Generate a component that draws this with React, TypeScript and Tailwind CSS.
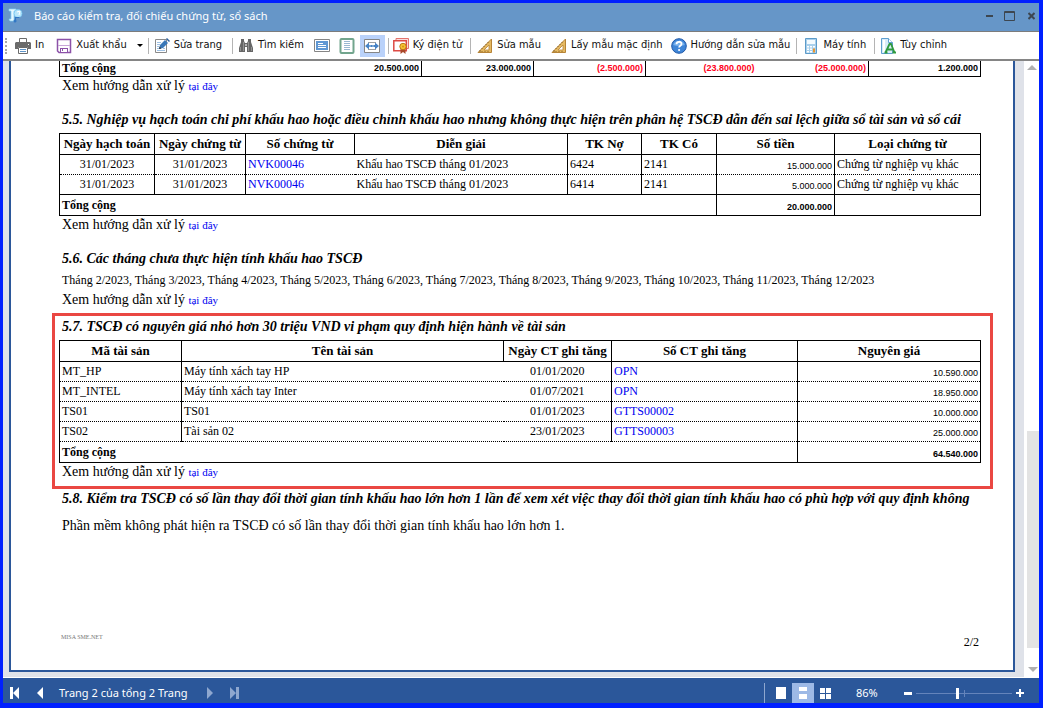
import type { ReactNode } from 'react';

const SERIF = "font-['Liberation_Serif',serif]";
const NUM = "font-['Liberation_Sans',sans-serif] text-[9px]";

/* ---------- toolbar icons ---------- */

const svg = (children: ReactNode) => (
  <svg width="16" height="16" viewBox="0 0 16 16" fill="none" aria-hidden="true" className="shrink-0">
    {children}
  </svg>
);

const PrinterIcon = () =>
  svg(
    <>
      <path d="M4.5 4.5v-4h7v4" fill="#fff" stroke="#6b6b6b" />
      <path d="M1 4h14l1 1v6h-3V9H3v2H0V5z" fill="#6b6b6b" />
      <path d="M3.5 9.5h9v6h-9z" fill="#fff" stroke="#6b6b6b" />
      <path d="M5 11.5h6M5 13.5h6" stroke="#5d93c8" />
      <path d="M13 6h1v1h-1z" fill="#fff" />
    </>,
  );

const SaveIcon = () =>
  svg(
    <>
      <path d="M1.5 1.5h13v13H3l-1.5-1.5z" fill="#fff" stroke="#8c52a8" strokeWidth="1.5" />
      <path d="M2 7.5h12" stroke="#c9a6d8" />
      <path d="M4 15v-5h8v5" fill="#8c52a8" />
      <path d="M5 11h6v3H5z" fill="#fff" />
      <path d="M6 11h1v2H6z" fill="#8c52a8" />
    </>,
  );

const EditPageIcon = () =>
  svg(
    <>
      <path d="M1.5 1.5h11v13h-11z" fill="#fff" stroke="#8a8a8a" />
      <path d="M3 4.5h4M3 6.5h3M3 8.5h2M3 10.5h2M3 12.5h8M9 10.5h2" stroke="#9ec1e4" />
      <path d="M5 11l1-4 5-5 3 3-5 5z" fill="#3a78b8" />
      <path d="M12 1l1-1 3 3-1 1z" fill="#2b5f9c" />
      <path d="M5 11l.6-2.4 1.8 1.8z" fill="#333" />
    </>,
  );

const BinocularsIcon = () =>
  svg(
    <>
      <path d="M3 1h3v2l1 2v9H1v-4L3 4zM10 1h3v3l2 6v4H9V5l1-2z" fill="#666" />
      <path d="M6 5h4v4H6z" fill="#666" />
      <path d="M7.5 6h1v2h-1z" fill="#fff" />
      <path d="M2.5 9v4M13.5 9v4M5.5 4v9M10.5 4v9" stroke="#a5a5a5" strokeWidth=".7" />
    </>,
  );

const LandscapeIcon = () =>
  svg(
    <>
      <path d="M.5 1.5h15v12H.5z" fill="#fff" stroke="#858585" />
      <path d="M2 3h12v9H2z" fill="#5f97d3" />
      <path d="M4 5.5h5M4 7.5h8M4 9.5h8" stroke="#fff" />
    </>,
  );

const PortraitIcon = () =>
  svg(
    <>
      <rect x="1.5" y="1" width="13" height="14" rx="1" fill="#fff" stroke="#72a58d" strokeWidth="2" />
      <path d="M5 3.5h6M5 5.5h6M5 7.5h6M5 9.5h6M5 11.5h6" stroke="#9ab8d2" />
    </>,
  );

const FitWidthIcon = () =>
  svg(
    <>
      <path d="M.5 1.5h15v13H.5z" fill="#fff" stroke="#858585" />
      <path d="M4 4.5h8M4 11.5h8" stroke="#a0a0a0" />
      <path d="M1 8l4-3.500V7h6V4.500L15 8l-4 3.500V9H5v2.500z" fill="#4783c5" />
      <path d="M5 8h6" stroke="#fff" strokeDasharray="2 1" strokeWidth=".6" />
    </>,
  );

const CertificateIcon = () =>
  svg(
    <>
      <path d="M3 .5h12.500v10H3z" fill="#fbdedb" stroke="#e4736d" />
      <path d="M.8 2.700h12.500v10H.8z" fill="#fff" stroke="#dd4b45" strokeWidth="1.500" />
      <path d="M7.500 10h5v6l-2.500-2-2.500 2z" fill="#a8482a" />
      <circle cx="10" cy="8.500" r="3.200" fill="#f5c431" stroke="#c07818" />
      <circle cx="10" cy="8.500" r="1.100" fill="#d99420" />
    </>,
  );

const SetSquareIcon = () =>
  svg(
    <>
      <path d="M14.500 1v13.500H1z" fill="#e5b962" stroke="#b78437" />
      <path d="M12 7v5H7z" fill="#fff" stroke="#b78437" strokeWidth=".8" />
      <path d="M3 12v2M5 10v1M7 8v1M9 6v1M11 4v1M5 13v1M8 13v1M11 13v1" stroke="#7c561c" strokeWidth=".8" />
    </>,
  );

const HelpIcon = () =>
  svg(
    <>
      <circle cx="8" cy="8" r="7.300" fill="#3f86d8" stroke="#2059a8" />
      <path d="M2.200 7a6 5.500 0 0 1 11.600 0q-5.800 2-11.600 0z" fill="#78b1ec" />
      <path d="M5.500 6.200c0-3.200 5-3.200 5-.2 0 1.800-2.400 1.700-2.400 3.600" stroke="#fff" strokeWidth="1.800" />
      <circle cx="8.100" cy="12" r="1.100" fill="#fff" />
    </>,
  );

const CalculatorIcon = () =>
  svg(
    <>
      <path d="M2.500 .5h11v15h-11z" fill="#a9d0ec" stroke="#5c9bc9" />
      <path d="M4 2h8v4H4z" fill="#f4fbff" />
      <path d="M4 8h2v1.500H4zM7 8h2v1.500H7zM10 8h2v1.500h-2zM4 10.500h2V12H4zM7 10.500h2V12H7zM4 13h2v1.500H4zM7 13h2v1.500H7z" fill="#fff" />
      <path d="M10 10.500h2v4h-2z" fill="#e8962f" />
    </>,
  );

const CustomizeIcon = () =>
  svg(
    <>
      <path d="M1.500 .5h7l4 4v11h-11z" fill="#d8ecfa" stroke="#5e9fd0" />
      <path d="M8.500 .5v4h4" fill="#fff" stroke="#5e9fd0" />
      <path d="M3 2h2v12H3z" fill="#fff" />
      <path d="M5.500 14.500L9.500 6h1.500l3.500 8.500M7.500 11.500h5M4.500 14.500h3M12.500 14.500h3.500" stroke="#2f9a3e" strokeWidth="1.800" />
    </>,
  );

const AppIcon = () =>
  svg(
    <>
      <path d="M1 1h7v2H6v10H2L1 11h2V3H1z" fill="#e9f8ff" stroke="#83d3f6" strokeWidth=".7" />
      <circle cx="10" cy="5.500" r="4" fill="#b9e6fb" stroke="#74c6f0" strokeWidth=".7" />
      <path d="M7.500 13.500v-4h4" stroke="#3277c4" strokeWidth="1.200" />
      <circle cx="7" cy="13" r="1.500" fill="#3277c4" />
      <path d="M9 4l3-1-1 4" stroke="#fff" />
    </>,
  );

/* ---------- toolbar ---------- */

const ToolButton = ({ icon, label }: { icon: ReactNode; label: string }) => (
  <button type="button" className="flex items-center gap-1 whitespace-nowrap">
    {icon}
    {label}
  </button>
);

const IconButton = ({ icon, label, active = false }: { icon: ReactNode; label: string; active?: boolean }) => (
  <button
    type="button"
    aria-label={label}
    aria-pressed={active}
    className={`flex h-[22px] w-[25px] items-center justify-center ${active ? 'bg-[#bad2fa]' : ''}`}
  >
    {icon}
  </button>
);

const Separator = () => <span className="h-4 w-px shrink-0 bg-[#b4b4b4]" />;

const Toolbar = () => (
  <div
    role="toolbar"
    className="flex h-[29px] shrink-0 items-center border-b-2 border-[#858585] bg-white pl-[2px] font-['DejaVu_Sans_Condensed','DejaVu_Sans',sans-serif] text-[11px] text-[#111]"
  >
    <span className="mr-2 h-4 w-0 border-l-2 border-dotted border-[#a8a8a8]" />
    <ToolButton icon={<PrinterIcon />} label="In" />
    <span className="w-3" />
    <ToolButton icon={<SaveIcon />} label="Xuất khẩu" />
    <button type="button" aria-label="Tùy chọn xuất khẩu" className="ml-[10px] mr-1 flex w-[7px] justify-center">
      <span className="border-x-[3px] border-t-[3px] border-x-transparent border-t-black" />
    </button>
    <Separator />
    <span className="w-[5px]" />
    <ToolButton icon={<EditPageIcon />} label="Sửa trang" />
    <span className="w-[10px]" />
    <Separator />
    <span className="w-[5px]" />
    <ToolButton icon={<BinocularsIcon />} label="Tìm kiếm" />
    <span className="w-[6px]" />
    <IconButton icon={<LandscapeIcon />} label="Toàn trang" />
    <IconButton icon={<PortraitIcon />} label="Trang dọc" />
    <IconButton icon={<FitWidthIcon />} label="Vừa chiều rộng" active />
    <span className="w-[3px]" />
    <Separator />
    <span className="w-1" />
    <ToolButton icon={<CertificateIcon />} label="Ký điện tử" />
    <span className="w-2" />
    <Separator />
    <span className="w-[6px]" />
    <ToolButton icon={<SetSquareIcon />} label="Sửa mẫu" />
    <span className="w-[10px]" />
    <ToolButton icon={<SetSquareIcon />} label="Lấy mẫu mặc định" />
    <span className="w-2" />
    <ToolButton icon={<HelpIcon />} label="Hướng dẫn sửa mẫu" />
    <span className="w-[6px]" />
    <Separator />
    <span className="w-[6px]" />
    <ToolButton icon={<CalculatorIcon />} label="Máy tính" />
    <span className="w-2" />
    <Separator />
    <span className="w-[5px]" />
    <ToolButton icon={<CustomizeIcon />} label="Tùy chỉnh" />
  </div>
);

/* ---------- report ---------- */

const Heading = ({ children }: { children: ReactNode }) => (
  <h2 className="mb-[3px] h-5 whitespace-nowrap pl-[3px] text-[14px] font-bold italic leading-5">{children}</h2>
);

const GuideLine = () => (
  <p className="h-[19px] pl-[3px] text-[14px] leading-[18px]">
    Xem hướng dẫn xử lý{' '}
    <a href="#huong-dan" className="text-[11px] text-[#0000f0]">
      tại đây
    </a>
  </p>
);

const TABLE = 'w-full table-fixed border-collapse border border-black text-[12px] leading-[14px]';
const TH = 'border border-black p-0 text-[13px] font-bold';
const ROW = 'h-5 border-b border-dotted border-black';
const TOTAL = 'h-[21px] border border-black font-bold';

const SummaryTable = () => (
  <table className="w-full table-fixed border-collapse border-x border-b border-black text-[12px] font-bold leading-[14px]">
    <colgroup>
      <col />
      <col className="w-[112px]" />
      <col className="w-[112px]" />
      <col className="w-[111px]" />
      <col className="w-[112px]" />
      <col className="w-[112px]" />
    </colgroup>
    <tbody>
      <tr className="h-[15px]">
        <td className="border-r border-black p-0">
          <div className="flex items-center justify-between pl-[2px] pr-[2px]">
            <span>Tổng cộng</span>
            <span className={NUM}>20.500.000</span>
          </div>
        </td>
        <td className={`border-r border-black p-0 pr-[2px] text-right ${NUM}`}>23.000.000</td>
        <td className={`border-r border-black p-0 pr-[2px] text-right text-[#ff0020] ${NUM}`}>(2.500.000)</td>
        <td className={`p-0 pr-[2px] text-right text-[#ff0020] ${NUM}`}>(23.800.000)</td>
        <td className={`border-r border-black p-0 pr-[2px] text-right text-[#ff0020] ${NUM}`}>(25.000.000)</td>
        <td className={`p-0 pr-[2px] text-right ${NUM}`}>1.200.000</td>
      </tr>
    </tbody>
  </table>
);

const ENTRIES = [
  { date: '31/01/2023', voucherDate: '31/01/2023', no: 'NVK00046', note: 'Khấu hao TSCĐ tháng 01/2023', debit: '6424', credit: '2141', amount: '15.000.000', kind: 'Chứng từ nghiệp vụ khác' },
  { date: '31/01/2023', voucherDate: '31/01/2023', no: 'NVK00046', note: 'Khấu hao TSCĐ tháng 01/2023', debit: '6414', credit: '2141', amount: '5.000.000', kind: 'Chứng từ nghiệp vụ khác' },
];

const EntryTable = () => (
  <table className={TABLE}>
    <colgroup>
      <col className="w-[95px]" />
      <col className="w-[91px]" />
      <col className="w-[109px]" />
      <col />
      <col className="w-[74px]" />
      <col className="w-[75px]" />
      <col className="w-[118px]" />
      <col className="w-[146px]" />
    </colgroup>
    <thead>
      <tr className="h-[21px]">
        <th className={TH}>Ngày hạch toán</th>
        <th className={TH}>Ngày chứng từ</th>
        <th className={TH}>Số chứng từ</th>
        <th className={TH}>Diễn giải</th>
        <th className={TH}>TK Nợ</th>
        <th className={TH}>TK Có</th>
        <th className={TH}>Số tiền</th>
        <th className={TH}>Loại chứng từ</th>
      </tr>
    </thead>
    <tbody>
      {ENTRIES.map((e, i) => (
        <tr key={i} className={ROW}>
          <td className="border-r border-r-black p-0 text-center">{e.date}</td>
          <td className="border-r border-r-black p-0 text-center">{e.voucherDate}</td>
          <td className="p-0 pl-[2px] text-[#0000f0]">{e.no}</td>
          <td className="border-r border-r-black p-0 pl-[2px]">{e.note}</td>
          <td className="border-r border-r-black p-0 pl-[2px]">{e.debit}</td>
          <td className="border-r border-r-black p-0 pl-[2px]">{e.credit}</td>
          <td className={`border-r border-r-black p-0 pr-[2px] pt-1 text-right ${NUM}`}>{e.amount}</td>
          <td className="p-0 pl-[2px]">{e.kind}</td>
        </tr>
      ))}
      <tr className={TOTAL}>
        <td colSpan={6} className="border border-black p-0 pl-[2px]">Tổng cộng</td>
        <td className={`border border-black p-0 pr-[2px] pt-1 text-right ${NUM}`}>20.000.000</td>
        <td className="border border-black p-0" />
      </tr>
    </tbody>
  </table>
);

const ASSETS = [
  { code: 'MT_HP', name: 'Máy tính xách tay HP', date: '01/01/2020', no: 'OPN', cost: '10.590.000' },
  { code: 'MT_INTEL', name: 'Máy tính xách tay Inter', date: '01/07/2021', no: 'OPN', cost: '18.950.000' },
  { code: 'TS01', name: 'TS01', date: '01/01/2023', no: 'GTTS00002', cost: '10.000.000' },
  { code: 'TS02', name: 'Tài sản 02', date: '23/01/2023', no: 'GTTS00003', cost: '25.000.000' },
];

const AssetTable = () => (
  <table className={TABLE}>
    <colgroup>
      <col className="w-[122px]" />
      <col />
      <col className="w-[108px]" />
      <col className="w-[186px]" />
      <col className="w-[183px]" />
    </colgroup>
    <thead>
      <tr className="h-[21px]">
        <th className={TH}>Mã tài sản</th>
        <th className={TH}>Tên tài sản</th>
        <th className={TH}>Ngày CT ghi tăng</th>
        <th className={TH}>Số CT ghi tăng</th>
        <th className={TH}>Nguyên giá</th>
      </tr>
    </thead>
    <tbody>
      {ASSETS.map((a) => (
        <tr key={a.code} className={ROW}>
          <td className="border-r border-r-black p-0 pl-[2px]">{a.code}</td>
          <td className="p-0 pl-[2px]">{a.name}</td>
          <td className="border-r border-r-black p-0 text-center">{a.date}</td>
          <td className="border-r border-r-black p-0 pl-[2px] text-[#0000f0]">{a.no}</td>
          <td className={`p-0 pr-[2px] pt-1 text-right ${NUM}`}>{a.cost}</td>
        </tr>
      ))}
      <tr className="h-[21px] font-bold">
        <td colSpan={4} className="border-r border-r-black p-0 pl-[2px]">Tổng cộng</td>
        <td className={`p-0 pr-[2px] pt-1 text-right ${NUM}`}>64.540.000</td>
      </tr>
    </tbody>
  </table>
);

const Report = () => (
  <main className={`flex flex-1 flex-col border-x-2 border-b-2 border-[#2b579a] bg-white pl-12 pr-8 text-black ${SERIF}`}>
    <SummaryTable />
    <GuideLine />
    <section className="mt-[14px]">
      <Heading>
        5.5. Nghiệp vụ hạch toán chi phí khấu hao hoặc điều chỉnh khấu hao nhưng không thực hiện trên phân hệ TSCĐ dẫn đến sai lệch giữa sổ tài sản và sổ cái
      </Heading>
      <EntryTable />
      <GuideLine />
    </section>
    <section className="mt-[14px]">
      <Heading>5.6. Các tháng chưa thực hiện tính khấu hao TSCĐ</Heading>
      <p className="h-[19px] whitespace-nowrap pl-[3px] text-[12px] leading-[17px]">
        Tháng 2/2023, Tháng 3/2023, Tháng 4/2023, Tháng 5/2023, Tháng 6/2023, Tháng 7/2023, Tháng 8/2023, Tháng 9/2023, Tháng 10/2023, Tháng 11/2023, Tháng 12/2023
      </p>
      <GuideLine />
    </section>
    <section className="relative mt-[7px]">
      <div className="pointer-events-none absolute -bottom-[7px] -left-[7px] -right-3 -top-1 border-[3px] border-[#ea4742]" />
      <Heading>5.7. TSCĐ có nguyên giá nhỏ hơn 30 triệu VND vi phạm quy định hiện hành về tài sản</Heading>
      <AssetTable />
      <GuideLine />
    </section>
    <section className="mt-[7px]">
      <Heading>
        5.8. Kiểm tra TSCĐ có số lần thay đổi thời gian tính khấu hao lớn hơn 1 lần để xem xét việc thay đổi thời gian tính khấu hao có phù hợp với quy định không
      </Heading>
      <p className="mt-[7px] pl-[3px] text-[14px] leading-5">
        Phần mềm không phát hiện ra TSCĐ có số lần thay đổi thời gian tính khấu hao lớn hơn 1.
      </p>
    </section>
    <footer className="mt-auto flex items-start justify-between pb-[18px] pl-[2px] pr-[2px]">
      <span className="text-[6px] leading-[10px] text-[#777]">MISA SME.NET</span>
      <span className="text-[12px] leading-5">2/2</span>
    </footer>
  </main>
);

/* ---------- status bar ---------- */

const StatusBar = () => (
  <footer className="flex h-[25px] shrink-0 items-center bg-[#2b579a] pt-[5px] font-['Noto_Sans','Open_Sans',sans-serif] text-[11px] text-white">
    <button type="button" aria-label="Trang đầu" className="ml-[7px] w-[10px]">
      <svg width="10" height="12" viewBox="0 0 10 12" fill="#fff"><path d="M0 0h3v12H0zM9 0v12L3 6z" /></svg>
    </button>
    <button type="button" aria-label="Trang trước" className="ml-[17px] w-[7px]">
      <svg width="7" height="12" viewBox="0 0 7 12" fill="#fff"><path d="M6 0v12L0 6z" /></svg>
    </button>
    <span className="ml-[15px] whitespace-nowrap">Trang 2 của tổng 2 Trang</span>
    <button type="button" aria-label="Trang sau" className="ml-[19px] w-[7px]">
      <svg width="7" height="12" viewBox="0 0 7 12" fill="#8ea7cf"><path d="M0 0v12l6-6z" /></svg>
    </button>
    <button type="button" aria-label="Trang cuối" className="ml-4 w-[10px]">
      <svg width="10" height="12" viewBox="0 0 10 12" fill="#8ea7cf"><path d="M0 0v12l6-6zM6 0h3v12H6z" /></svg>
    </button>
    <div className="ml-auto flex h-full items-center">
      <span className="mr-[5px] h-full w-px bg-[#8ea7cf]" />
      <button type="button" aria-label="Một trang" className="flex h-5 w-[22px] items-center justify-center">
        <svg width="10" height="12" viewBox="0 0 10 12" fill="#fff"><path d="M0 0h10v12H0z" /></svg>
      </button>
      <button type="button" aria-label="Liên tục" aria-pressed="true" className="flex h-5 w-[22px] items-center justify-center bg-[#9db9e6]">
        <svg width="10" height="12" viewBox="0 0 10 12" fill="#fff"><path d="M1 0h8v4H1zM1 7h8v5H1z" /></svg>
      </button>
      <button type="button" aria-label="Nhiều trang" className="flex h-5 w-[22px] items-center justify-center">
        <svg width="11" height="11" viewBox="0 0 11 11" fill="#fff"><path d="M0 0h5v5H0zM6 0h5v5H6zM0 6h5v5H0zM6 6h5v5H6z" /></svg>
      </button>
      <span className="ml-5 w-[45px]">86%</span>
      <button type="button" aria-label="Thu nhỏ" className="flex w-[13px] justify-center">
        <svg width="8" height="3" viewBox="0 0 8 3" fill="#fff"><path d="M0 0h8v3H0z" /></svg>
      </button>
      <svg width="96" height="11" viewBox="0 0 96 11" className="ml-[2px]" role="img" aria-label="Thu phóng 86%">
        <path d="M0 5.500h96M48.500 2v7" stroke="#6484bb" />
        <path d="M40 0h3v11h-3z" fill="#fff" />
      </svg>
      <button type="button" aria-label="Phóng to" className="ml-1 mr-[15px] w-2">
        <svg width="8" height="8" viewBox="0 0 8 8" fill="#fff"><path d="M3 0h2v3h3v2H5v3H3V5H0V3h3z" /></svg>
      </button>
    </div>
  </footer>
);

export default function App() {
  return (
    <div className="flex min-h-screen flex-col border-b-[5px] border-l-[3px] border-r-[4px] border-t-[3px] border-[#0020ff] bg-white">
      <header className="flex h-[29px] shrink-0 items-center border-b border-[#7c7c7c] bg-[#6696c8] pb-[2px] pl-[5px] font-['Noto_Sans','Open_Sans',sans-serif] text-[11px] text-white">
        <AppIcon />
        <h1 className="ml-[10px] whitespace-nowrap">Báo cáo kiểm tra, đối chiếu chứng từ, sổ sách</h1>
        <div className="ml-auto flex items-center">
          <button type="button" aria-label="Thu nhỏ cửa sổ" className="w-[7px]">
            <svg width="7" height="2" viewBox="0 0 7 2"><path d="M0 0h7v2H0z" fill="#3d4650" /></svg>
          </button>
          <button type="button" aria-label="Phóng to cửa sổ" className="ml-[11px] w-[11px]">
            <svg width="11" height="10" viewBox="0 0 11 10" fill="none"><path d="M.5 .5h10v9H.5zM0 1.500h11" stroke="#3d4650" /></svg>
          </button>
          <button type="button" aria-label="Đóng" className="ml-[13px] mr-1 w-[7px]">
            <svg width="7" height="8" viewBox="0 0 7 8"><path d="M.5 1l6 6M6.500 1l-6 6" stroke="#3d4650" strokeWidth="2" /></svg>
          </button>
        </div>
      </header>
      <Toolbar />
      <div className="flex flex-1 bg-[#dfe2e9]">
        <div className="flex flex-1 flex-col pb-[5px] pl-[6px] pr-[9px]">
          <Report />
        </div>
        <div className="flex w-[15px] flex-col items-end bg-white" aria-hidden="true">
          <span className="mr-[2px] mt-1 border-x-[5px] border-b-[5px] border-x-transparent border-b-[#b0b0b0]" />
          <span className="mt-auto h-[217px] w-3 bg-[#e3e3e3]" />
          <span className="mb-[5px] mr-[1px] mt-[19px] border-x-[5px] border-t-[5px] border-x-transparent border-t-[#b0b0b0]" />
        </div>
      </div>
      <div className="h-px shrink-0 bg-white" />
      <StatusBar />
    </div>
  );
}
